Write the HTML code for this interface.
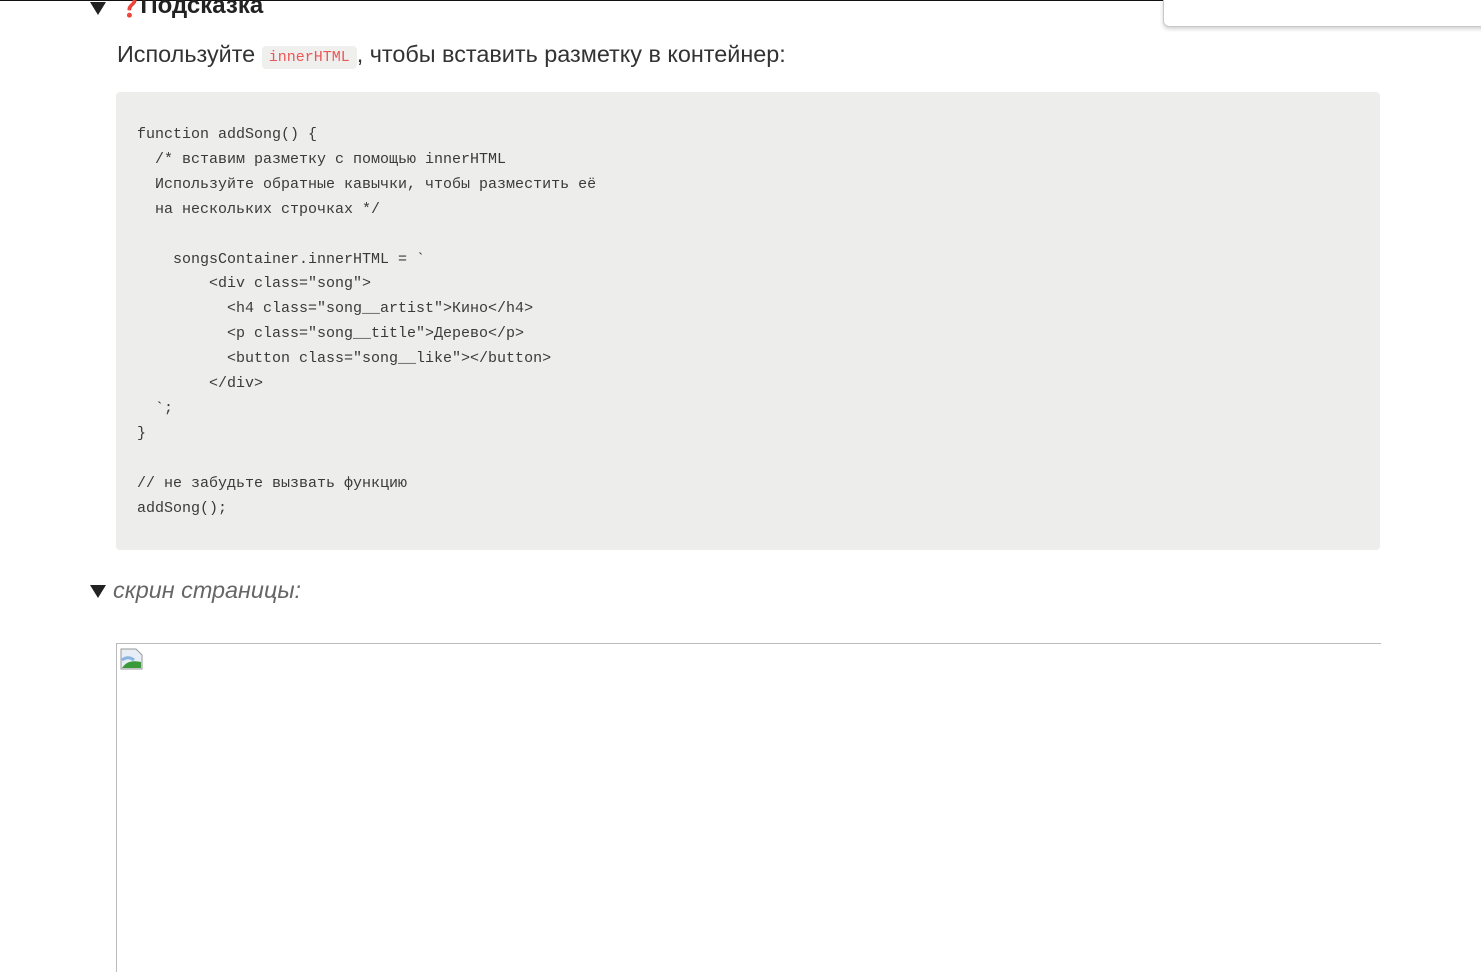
<!DOCTYPE html>
<html><head><meta charset="utf-8"><style>
html,body{margin:0;padding:0;width:1481px;height:972px;overflow:hidden;background:#fff;}
body{font-family:"Liberation Sans","DejaVu Sans",sans-serif;color:#37352f;position:relative;}
.topline{position:absolute;left:0;top:0;width:1481px;height:1px;background:#111;}
.box{position:absolute;left:1163px;top:-5px;width:330px;height:30px;background:#fff;border:1px solid #c8c8c8;border-radius:6px;box-shadow:0 2px 4px rgba(0,0,0,.18);}
.tri{position:absolute;width:0;height:0;border-left:8px solid transparent;border-right:8px solid transparent;border-top:13px solid #222;}
.h{position:absolute;left:116px;top:-8px;font-size:24px;font-weight:bold;color:#222;}
.q{color:#c8101e;font-size:22px;margin-right:-3px;}
.p{position:absolute;left:117px;top:41px;font-size:23.4px;color:#333;}
.p code{font-family:"Liberation Mono",monospace;font-size:15px;color:#eb5757;background:#efefed;border-radius:4px;padding:3px 7px;position:relative;top:-1px;}
pre{position:absolute;left:116px;top:92px;width:1264px;height:458px;margin:0;background:#ededeb;border-radius:4px;box-sizing:border-box;padding:31px 21px;font-family:"Liberation Mono",monospace;font-size:15px;line-height:24.9px;color:#3a3a3a;}
.s{position:absolute;left:113px;top:577px;font-size:23.4px;color:#666;}
.s i{font-family:"Liberation Sans",sans-serif;}
.frame{position:absolute;left:116px;top:643px;width:1264px;height:340px;border-left:1px solid #bbb;border-top:1px solid #bbb;}
.ic{position:absolute;left:3px;top:4px;}
</style></head><body>
<div class="topline"></div>
<div class="box"></div>
<div class="tri" style="left:90px;top:2px"></div>
<div class="h"><span class="q">❓</span>Подсказка</div>
<div class="p">Используйте <code>innerHTML</code>, чтобы вставить разметку в контейнер:</div>
<pre>function addSong() {
  /* вставим разметку с помощью innerHTML
  Используйте обратные кавычки, чтобы разместить её
  на нескольких строчках */

    songsContainer.innerHTML = `
        &lt;div class="song"&gt;
          &lt;h4 class="song__artist"&gt;Кино&lt;/h4&gt;
          &lt;p class="song__title"&gt;Дерево&lt;/p&gt;
          &lt;button class="song__like"&gt;&lt;/button&gt;
        &lt;/div&gt;
  `;
}

// не забудьте вызвать функцию
addSong();</pre>
<div class="tri" style="left:90px;top:585px"></div>
<div class="s"><i>скрин страницы:</i></div>
<div class="frame"><svg class="ic" width="24" height="22" viewBox="0 0 24 22"><path d="M1 1h15l6 6v14H1z" fill="#e8eef6" stroke="#999"/><path d="M2 20c4-6 9-8 19-6v6z" fill="#3a9a3a"/><path d="M2 12c4-3 8-3 12 0" fill="none" stroke="#8ab4e0" stroke-width="3"/></svg></div>
</body></html>
